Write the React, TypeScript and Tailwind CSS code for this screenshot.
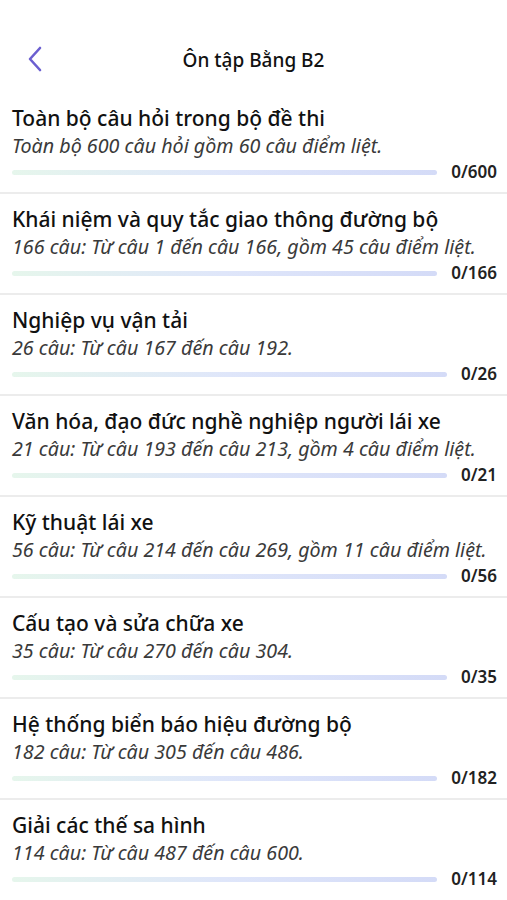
import React from "react";

const items = [
  { t: "Toàn bộ câu hỏi trong bộ đề thi", s: "Toàn bộ 600 câu hỏi gồm 60 câu điểm liệt.", n: "0/600" },
  { t: "Khái niệm và quy tắc giao thông đường bộ", s: "166 câu: Từ câu 1 đến câu 166, gồm 45 câu điểm liệt.", n: "0/166" },
  { t: "Nghiệp vụ vận tải", s: "26 câu: Từ câu 167 đến câu 192.", n: "0/26" },
  { t: "Văn hóa, đạo đức nghề nghiệp người lái xe", s: "21 câu: Từ câu 193 đến câu 213, gồm 4 câu điểm liệt.", n: "0/21" },
  { t: "Kỹ thuật lái xe", s: "56 câu: Từ câu 214 đến câu 269, gồm 11 câu điểm liệt.", n: "0/56" },
  { t: "Cấu tạo và sửa chữa xe", s: "35 câu: Từ câu 270 đến câu 304.", n: "0/35" },
  { t: "Hệ thống biển báo hiệu đường bộ", s: "182 câu: Từ câu 305 đến câu 486.", n: "0/182" },
  { t: "Giải các thế sa hình", s: "114 câu: Từ câu 487 đến câu 600.", n: "0/114" },
];

export default function App() {
  return (
    <div className="w-[507px] h-[900px] overflow-hidden bg-white text-[#111]" style={{ fontFamily: '"Noto Sans", sans-serif' }}>
      <div className="relative h-[93px] flex justify-center">
        <svg className="absolute left-[26px] top-[45px]" width="18" height="28" viewBox="0 0 18 28" fill="none">
          <path d="M14 3 L4 14 L14 25" stroke="#6b5fd0" strokeWidth="2.6" strokeLinecap="round" strokeLinejoin="round" />
        </svg>
        <div className="mt-[46px] leading-[28px] text-[19px] font-medium text-[#111]">Ôn tập Bằng B2</div>
      </div>
      {items.map((it, i) => (
        <div key={i} className={"pl-[12px] pr-[10px] pt-[11px] pb-[8px] " + (i < items.length - 1 ? "border-b-[2px] border-[#ececec]" : "")}>
          <div className="text-[21px] font-medium leading-[28px] text-[#111] whitespace-nowrap">{it.t}</div>
          <div className="text-[19.7px] italic leading-[28px] text-[#3a3a3a] whitespace-nowrap">{it.s}</div>
          <div className="flex items-center gap-[14px] h-[24px]">
            <div className="flex-1 h-[5px] rounded-full bg-gradient-to-r from-[#e6f6ec] via-[#dfe6fa] to-[#d4dbf7]" />
            <div className="text-[17px] font-semibold text-[#222]">{it.n}</div>
          </div>
        </div>
      ))}
    </div>
  );
}
